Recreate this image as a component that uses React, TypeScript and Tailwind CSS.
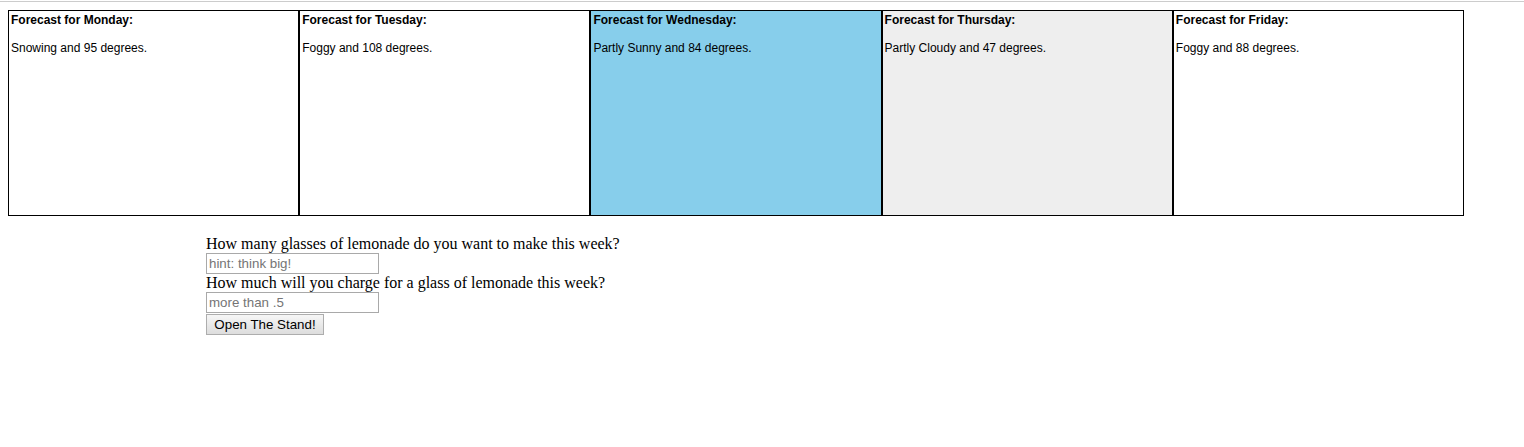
import React from "react";

const days = [
  { day: "Monday", text: "Snowing and 95 degrees.", bg: "bg-white" },
  { day: "Tuesday", text: "Foggy and 108 degrees.", bg: "bg-white" },
  { day: "Wednesday", text: "Partly Sunny and 84 degrees.", bg: "bg-[#87ceeb]" },
  { day: "Thursday", text: "Partly Cloudy and 47 degrees.", bg: "bg-[#eeeeee]" },
  { day: "Friday", text: "Foggy and 88 degrees.", bg: "bg-white" },
];

export default function App() {
  return (
    <div className="w-[1524px] h-[447px] bg-white overflow-hidden">
      <div className="mt-px h-px bg-[#cccccc]" />
      <div className="ml-2 mt-2 flex w-[1456px] font-['Liberation_Sans',Arial,sans-serif] text-[12px] leading-[14px] text-black">
        {days.map((d) => (
          <div
            key={d.day}
            className={`flex-1 h-[206px] border border-black px-[2px] pt-[2px] ${d.bg}`}
          >
            <div className="font-bold">Forecast for {d.day}:</div>
            <div className="mt-[14px]">{d.text}</div>
          </div>
        ))}
      </div>
      <div className="ml-[206px] mt-[19px] flex flex-col items-start font-['Liberation_Serif','Times_New_Roman',serif] text-[16px] leading-[18px] text-black">
        <div>How many glasses of lemonade do you want to make this week?</div>
        <input
          className="w-[173px] h-[21px] border border-[#a9a9a9] px-[2px] font-['Liberation_Sans',Arial,sans-serif] text-[13.33px] placeholder:text-[#757575] outline-none"
          placeholder="hint: think big!"
        />
        <div>How much will you charge for a glass of lemonade this week?</div>
        <input
          className="w-[173px] h-[21px] border border-[#a9a9a9] px-[2px] font-['Liberation_Sans',Arial,sans-serif] text-[13.33px] placeholder:text-[#757575] outline-none"
          placeholder="more than .5"
        />
        <button className="mt-px w-[118px] h-[21px] border border-[#adadad] bg-gradient-to-b from-[#f6f6f6] to-[#dddddd] font-['Liberation_Sans',Arial,sans-serif] text-[13.33px] leading-[15px] text-black">
          Open The Stand!
        </button>
      </div>
    </div>
  );
}
